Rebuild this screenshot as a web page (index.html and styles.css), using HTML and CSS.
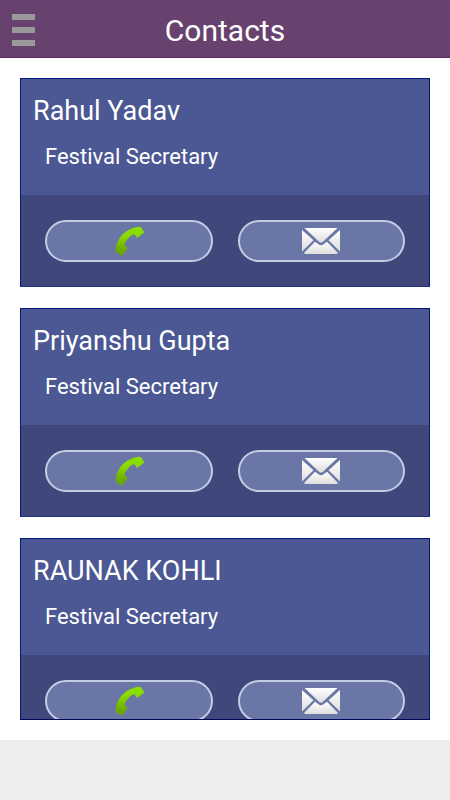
FILE: index.html
```html
<!DOCTYPE html>
<html lang="en">
<head>
<meta charset="utf-8">
<meta name="viewport" content="width=device-width, initial-scale=1">
<title>Contacts</title>
<link rel="stylesheet" href="styles.css">
</head>
<body>
<svg class="defs" aria-hidden="true">
  <defs>
    <linearGradient id="green" x1="0" y1="0" x2="0" y2="1">
      <stop offset="0.3" stop-color="#8bdc00"/>
      <stop offset="0.85" stop-color="#6aa800"/>
    </linearGradient>
    <linearGradient id="paper" x1="0" y1="0" x2="0" y2="1">
      <stop offset="0" stop-color="#ffffff"/>
      <stop offset="1" stop-color="#dedede"/>
    </linearGradient>
    <symbol id="phone" viewBox="-1 0 30 30">
      <path fill="url(#green)" d="M22 1C24 .4 25.500 .6 26.600 2L28.800 5.600C29.200 6.200 29.100 6.700 28.600 7.100L22.800 11.600C22.200 12 21.800 11.900 21.400 11.300L19.300 8C17 8.600 14.600 10.600 12.700 13C10.800 15.500 9.600 17.700 9.500 19.500L12 21.300C12.500 21.700 12.600 22.200 12.200 22.800L7.600 28.900C7.100 29.500 6.500 29.600 5.900 29.200L1.900 26.500C1 25.900 .6 25.200 .7 24C.9 18.500 3.500 12.700 7.800 8.300C12 4 17 2 22 1Z"/>
    </symbol>
    <symbol id="mail" viewBox="0 0 38 26">
      <g fill="url(#paper)">
        <path d="M2.500 0H35.500L21 13.700Q19 15.500 17 13.700Z"/>
        <path d="M0 2L11.500 12.300L0 23.500Z"/>
        <path d="M38 2V23.500L26.500 12.300Z"/>
        <path d="M13 13.700L16.500 16.300Q19 18 21.500 16.300L25 13.700L36 25Q35.500 26 34 26H4Q2.500 26 2 25Z"/>
      </g>
    </symbol>
  </defs>
</svg>
<header class="topbar">
  <button class="menu" type="button" aria-label="Menu"><span class="bar"></span><span class="bar"></span><span class="bar"></span></button>
  <h1 class="title">Contacts</h1>
</header>
<main class="content">
  <div class="list">
    <article class="card">
      <div class="info"><h2 class="name">Rahul Yadav</h2><p class="role">Festival Secretary</p></div>
      <div class="actions">
        <button class="action" type="button" aria-label="Call Rahul Yadav"><svg class="phone"><use href="#phone"/></svg></button>
        <button class="action" type="button" aria-label="Email Rahul Yadav"><svg class="mail"><use href="#mail"/></svg></button>
      </div>
    </article>
    <article class="card">
      <div class="info"><h2 class="name">Priyanshu Gupta</h2><p class="role">Festival Secretary</p></div>
      <div class="actions">
        <button class="action" type="button" aria-label="Call Priyanshu Gupta"><svg class="phone"><use href="#phone"/></svg></button>
        <button class="action" type="button" aria-label="Email Priyanshu Gupta"><svg class="mail"><use href="#mail"/></svg></button>
      </div>
    </article>
    <article class="card">
      <div class="info"><h2 class="name">RAUNAK KOHLI</h2><p class="role">Festival Secretary</p></div>
      <div class="actions">
        <button class="action" type="button" aria-label="Call Raunak Kohli"><svg class="phone"><use href="#phone"/></svg></button>
        <button class="action" type="button" aria-label="Email Raunak Kohli"><svg class="mail"><use href="#mail"/></svg></button>
      </div>
    </article>
  </div>
</main>
<footer class="footer"></footer>
</body>
</html>
```
FILE: styles.css
```css
* {
  box-sizing: border-box;
}

body {
  margin: 0;
  height: 100vh;
  display: flex;
  flex-direction: column;
  background: #fff;
  color: #fff;
  font-family: Roboto, sans-serif;
}

.defs {
  position: absolute;
  width: 0;
  height: 0;
}

.topbar {
  flex: none;
  display: grid;
  grid-template-columns: 36px 1fr 36px;
  align-items: center;
  padding: 11px 0 6px;
  background: #68426f;
  border-bottom: 1px solid #5b2865;
}

.menu {
  display: flex;
  flex-direction: column;
  gap: 7px;
  padding: 0 1px 2px 12px;
  border: 0;
  background: none;
}

.bar {
  width: 100%;
  height: 6px;
  background: #999;
}

.title {
  margin: 0;
  font-size: 30px;
  line-height: 40px;
  font-weight: 400;
  text-align: center;
}

.content {
  flex: 1;
  min-height: 0;
  display: flex;
  padding: 20px;
}

.list {
  flex: 1;
  overflow: hidden;
  border-bottom: 1px solid #00085c;
}

.card {
  margin-bottom: 21px;
  border: 1px solid #001a80;
  border-bottom-color: #26337c;
  background: #3f477b;
}

.info {
  padding: 12px;
  background: #4b5893;
}

.name {
  margin: 0;
  font-size: 27px;
  line-height: 40px;
  font-weight: 400;
}

.role {
  margin: 0;
  padding: 10px 12px;
  font-size: 22px;
  line-height: 32px;
}

.actions {
  display: flex;
  gap: 25px;
  padding: 25px 24px 24px;
}

.action {
  flex: 1;
  height: 42px;
  display: flex;
  align-items: center;
  justify-content: center;
  padding: 0;
  border: 2px solid #c3cde6;
  border-radius: 21px;
  background: #6a77a6;
}

.phone {
  width: 30px;
  height: 30px;
}

.mail {
  width: 38px;
  height: 26px;
}

.footer {
  flex: none;
  height: 60px;
  background: #ededed;
}
```
